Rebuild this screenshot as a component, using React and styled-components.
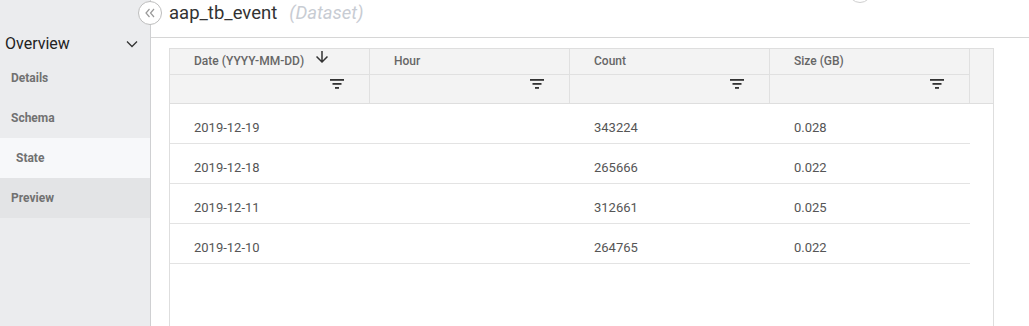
import React from 'react';
import styled, { createGlobalStyle } from 'styled-components';

const GlobalStyle = createGlobalStyle`
  html, body {
    margin: 0;
    padding: 0;
    background: #fff;
    overflow: hidden;
  }
  body {
    font-family: Roboto, "Liberation Sans", Arial, sans-serif;
  }
`;

const Page = styled.div`
  display: flex;
  width: 1029px;
  height: 326px;
  overflow: hidden;
  position: relative;
`;

const Sidebar = styled.aside`
  width: 150px;
  flex-shrink: 0;
  background: #ebecee;
  border-right: 1px solid #cfd0d2;
  padding-top: 29px;
  box-sizing: content-box;
`;

const SectionHead = styled.div`
  display: flex;
  align-items: center;
  justify-content: space-between;
  height: 29px;
  padding: 0 12px 0 5px;
  font-size: 16px;
  color: #222;
`;

const NavItem = styled.div`
  display: flex;
  align-items: center;
  height: 40px;
  padding-left: ${(p) => (p.$sub ? '16px' : '11px')};
  font-size: 12px;
  font-weight: 700;
  color: #717171;
  background: ${(p) =>
    p.$active ? '#f7f8fa' : p.$hover ? '#e3e4e6' : 'transparent'};
`;

const CollapseButton = styled.button`
  position: absolute;
  left: 138px;
  top: 1px;
  width: 24px;
  height: 24px;
  padding: 0;
  border-radius: 50%;
  border: 1px solid #bdbdbd;
  background: #fff;
  display: flex;
  align-items: center;
  justify-content: center;
  z-index: 2;
`;

const Main = styled.main`
  flex: 1;
  display: flex;
  flex-direction: column;
  min-width: 0;
`;

const Header = styled.header`
  position: relative;
  flex-shrink: 0;
  height: 37px;
  border-bottom: 1px solid #d6d6d6;
  padding-left: 18px;
  display: flex;
  align-items: flex-start;
  gap: 12px;
  line-height: 26px;
  font-size: 18.5px;
`;

const Title = styled.span`
  color: #333;
`;

const Kind = styled.span`
  color: #c8ccd3;
  font-style: italic;
`;

const TopCircle = styled.div`
  position: absolute;
  left: 697px;
  top: -21px;
  width: 22px;
  height: 22px;
  border-radius: 50%;
  border: 1px solid #cfcfcf;
  background: #fff;
`;

const Table = styled.div`
  margin: 10px 0 0 18px;
  width: 823px;
  height: 400px;
  border: 1px solid #dedede;
  border-bottom: none;
  flex-shrink: 0;
`;

const Head = styled.div`
  display: grid;
  grid-template-columns: repeat(4, 200px) 23px;
  grid-template-rows: 26px 28px;
  background: #f3f3f3;
  border-bottom: 1px solid #dedede;
`;

const LabelCell = styled.div`
  display: flex;
  align-items: center;
  padding: 0 0 1px 24px;
  border-right: 1px solid #e0e0e0;
  border-bottom: 1px solid #e0e0e0;
  font-size: 12px;
  font-weight: 500;
  color: #666;
  white-space: nowrap;
`;

const FilterCell = styled.div`
  display: flex;
  justify-content: flex-end;
  align-items: flex-start;
  padding: 4px 25px 0 0;
  border-right: 1px solid #e0e0e0;
`;

const Gutter = styled.div`
  grid-column: 5;
  grid-row: 1 / span 2;
`;

const SortIcon = styled.svg`
  margin: 0 0 8px 9px;
  flex-shrink: 0;
`;

const Row = styled.div`
  display: grid;
  grid-template-columns: repeat(4, 200px);
  width: 800px;
  height: 39px;
  border-bottom: 1px solid #e3e3e3;
`;

const Cell = styled.div`
  padding: 16px 0 0 24px;
  line-height: 16px;
  font-size: 13px;
  color: #555;
`;

const columns = ['Date (YYYY-MM-DD)', 'Hour', 'Count', 'Size (GB)'];

const rows = [
  ['2019-12-19', '', '343224', '0.028'],
  ['2019-12-18', '', '265666', '0.022'],
  ['2019-12-11', '', '312661', '0.025'],
  ['2019-12-10', '', '264765', '0.022'],
];

function FilterIcon() {
  return (
    <svg width="14" height="10" viewBox="0 0 14 10" fill="#333">
      <rect x="0" y="0" width="14" height="1.8" />
      <rect x="2.5" y="4" width="9" height="1.8" />
      <rect x="5" y="8" width="4" height="1.8" />
    </svg>
  );
}

export default function App() {
  return (
    <>
      <GlobalStyle />
      <Page>
        <Sidebar>
          <SectionHead>
            Overview
            <svg width="12" height="8" viewBox="0 0 12 8">
              <polyline
                points="1,1.5 6,6.5 11,1.5"
                fill="none"
                stroke="#333"
                strokeWidth="1.3"
              />
            </svg>
          </SectionHead>
          <NavItem>Details</NavItem>
          <NavItem>Schema</NavItem>
          <NavItem $sub $active>
            State
          </NavItem>
          <NavItem $hover>Preview</NavItem>
        </Sidebar>

        <CollapseButton aria-label="Collapse">
          <svg width="12" height="10" viewBox="0 0 12 10">
            <polyline points="5.5,1 2,5 5.5,9" fill="none" stroke="#999" strokeWidth="1.2" />
            <polyline points="10,1 6.5,5 10,9" fill="none" stroke="#999" strokeWidth="1.2" />
          </svg>
        </CollapseButton>

        <Main>
          <Header>
            <Title>aap_tb_event</Title>
            <Kind>(Dataset)</Kind>
            <TopCircle />
          </Header>

          <Table>
            <Head>
              {columns.map((c, i) => (
                <LabelCell key={c}>
                  {c}
                  {i === 0 && (
                    <SortIcon width="18" height="18" viewBox="0 0 24 24" fill="#333">
                      <path d="M20 12l-1.41-1.41L13 16.17V4h-2v12.17l-5.58-5.59L4 12l8 8 8-8z" />
                    </SortIcon>
                  )}
                </LabelCell>
              ))}
              {columns.map((c) => (
                <FilterCell key={c + '-f'}>
                  <FilterIcon />
                </FilterCell>
              ))}
              <Gutter />
            </Head>
            {rows.map((r) => (
              <Row key={r[0]}>
                {r.map((v, i) => (
                  <Cell key={i}>{v}</Cell>
                ))}
              </Row>
            ))}
          </Table>
        </Main>
      </Page>
    </>
  );
}
